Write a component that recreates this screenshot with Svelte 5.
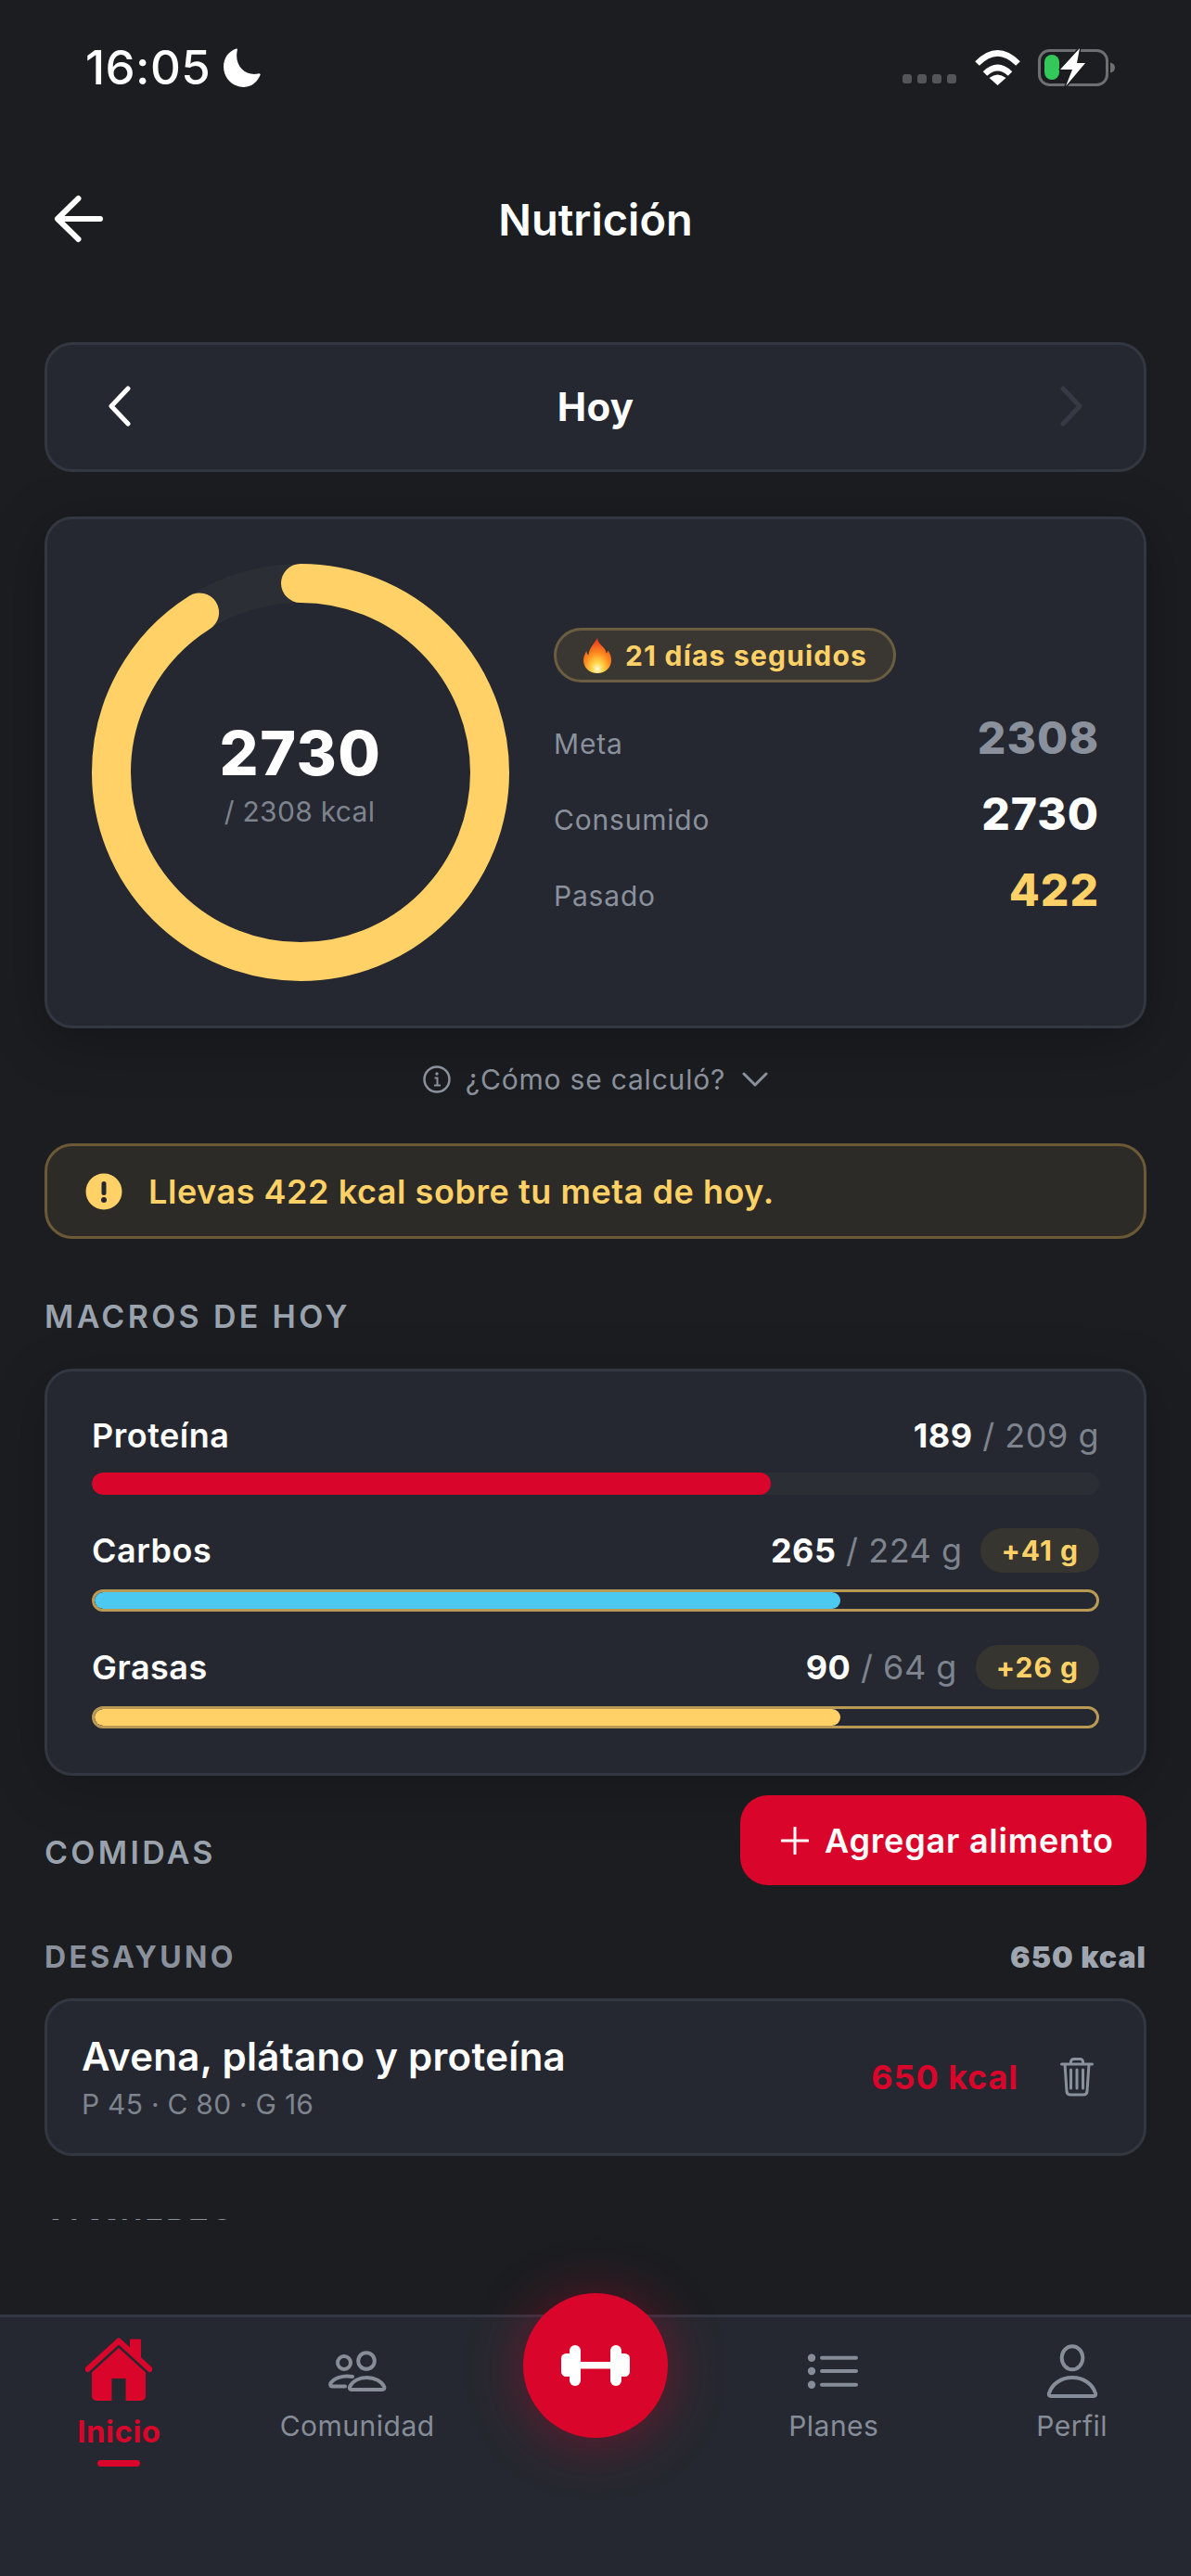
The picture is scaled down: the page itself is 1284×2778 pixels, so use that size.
<script>
  const stats = [
    { label: "Meta", value: "2308", tone: "muted" },
    { label: "Consumido", value: "2730", tone: "white" },
    { label: "Pasado", value: "422", tone: "gold" }
  ];

  const macros = [
    { name: "Proteína", eaten: 189, goal: 209, pct: 67.4, color: "#d9052b", extra: "" },
    { name: "Carbos", eaten: 265, goal: 224, pct: 74.4, color: "#4cc9f0", extra: "+41 g" },
    { name: "Grasas", eaten: 90, goal: 64, pct: 74.4, color: "#ffd166", extra: "+26 g" }
  ];

  const ringSize = 450;
  const ringStroke = 42;
  const ringRadius = (ringSize - ringStroke) / 2;
  const ringLength = 2 * Math.PI * ringRadius;
  const ringFill = 0.91;
</script>

<div class="app">
  <div class="status">
    <div class="status-left">
      <span class="time">16:05</span>
      <svg width="44" height="44" viewBox="0 0 42 42"><path fill="#fff" d="M14 1.500C6 4 1 11.500 1 20c0 11.500 9 21 21 21 8 0 14-5.500 17-13-1-1.500-2-1-4-.5C22 29 12 18 15 3.500c.5-2 0-2.500-1-2z"/></svg>
    </div>
    <div class="status-right">
      <div class="dots"><i></i><i></i><i></i><i></i></div>
      <svg class="wifi" width="51" height="38" viewBox="0 0 51 38">
        <path d="M3.500 14.500Q25.500-7.500 47.500 14.500" fill="none" stroke="#fff" stroke-width="6.500"/>
        <path d="M12 25.500Q25.500 12.500 39 25.500" fill="none" stroke="#fff" stroke-width="6.500"/>
        <path d="M25.500 38L16.500 30Q25.500 23 34.500 30z" fill="#fff"/>
      </svg>
      <svg width="88" height="44" viewBox="0 0 88 44">
        <rect x="3.500" y="3.500" width="73" height="37" rx="11" fill="none" stroke="#6e6f71" stroke-width="3"/>
        <path d="M80 16.500c3 .5 5 2.500 5 5.500s-2 5-5 5.500z" fill="#6e6f71"/>
        <rect x="9" y="8" width="16" height="27" rx="8" fill="#34c759"/>
        <path d="M47 1L26 24H39L32 42 53 17H44z" fill="#fff" stroke="#1b1d21" stroke-width="3" paint-order="stroke" stroke-linejoin="round"/>
      </svg>
    </div>
  </div>

  <header class="header">
    <svg width="60" height="60" viewBox="0 0 60 60"><path d="M53 30H9M29.500 8L7 30l22.500 22" fill="none" stroke="#fff" stroke-width="6" stroke-linecap="round" stroke-linejoin="round"/></svg>
    <h1>Nutrición</h1>
  </header>

  <main class="scroll">
    <div class="card day-nav">
      <svg width="30" height="44" viewBox="0 0 30 44"><path d="M23 3L5 22l18 19" fill="none" stroke="#fff" stroke-width="5" stroke-linecap="round" stroke-linejoin="round"/></svg>
      <span>Hoy</span>
      <svg width="30" height="44" viewBox="0 0 30 44"><path d="M7 3l18 19L7 41" fill="none" stroke="#353a45" stroke-width="5" stroke-linecap="round" stroke-linejoin="round"/></svg>
    </div>

    <section class="card ring-card">
      <div class="ring">
        <svg width={ringSize} height={ringSize} viewBox="0 0 {ringSize} {ringSize}">
          <circle cx="225" cy="225" r={ringRadius} fill="none" stroke="#2b2e35" stroke-width={ringStroke}/>
          <circle
            cx="225"
            cy="225"
            r={ringRadius}
            fill="none"
            stroke="#ffd166"
            stroke-width={ringStroke}
            stroke-linecap="round"
            stroke-dasharray="{ringLength * ringFill} {ringLength}"
            transform="rotate(-90 225 225)"
          />
        </svg>
        <div class="ring-text">
          <strong>2730</strong>
          <span>/ 2308 kcal</span>
        </div>
      </div>
      <div class="summary">
        <div class="streak">
          <svg width="30" height="38" viewBox="0 0 30 38">
            <defs>
              <radialGradient id="flame" cx="50%" cy="88%" r="85%">
                <stop offset="0" stop-color="#fffbe0"/>
                <stop offset="0.22" stop-color="#ffd84a"/>
                <stop offset="0.55" stop-color="#ff8a1f"/>
                <stop offset="1" stop-color="#e5341c"/>
              </radialGradient>
            </defs>
            <path fill="url(#flame)" d="M15 0c1 6 5 8 8 12 1 1.500 1.500 3 1.500 4.500 1-.5 1.500-1.500 1.800-3C29 17 30 20 30 24c0 8-6.500 14-15 14S0 32 0 24c0-4 1.500-7 3.500-10 0 2 .5 3.500 2 4.500C6 11 11 7 15 0z"/>
          </svg>
          <span>21 días seguidos</span>
        </div>
        <div class="stats">
          {#each stats as stat}
            <div class="stat">
              <span class="stat-label">{stat.label}</span>
              <span class="stat-value {stat.tone}">{stat.value}</span>
            </div>
          {/each}
        </div>
      </div>
    </section>

    <div class="how">
      <svg width="30" height="30" viewBox="0 0 30 30"><circle cx="15" cy="15" r="13.500" fill="none" stroke="#8a919c" stroke-width="2.500"/><path d="M12.500 13.500H15.500V21M12 21.500h7" fill="none" stroke="#8a919c" stroke-width="2"/><circle cx="15" cy="9" r="1.700" fill="#8a919c"/></svg>
      <span>¿Cómo se calculó?</span>
      <svg class="how-chevron" width="28" height="16" viewBox="0 0 28 16"><path d="M2 2l12 12L26 2" fill="none" stroke="#8a919c" stroke-width="3" stroke-linecap="round" stroke-linejoin="round"/></svg>
    </div>

    <div class="alert">
      <svg width="40" height="40" viewBox="0 0 40 40"><circle cx="20" cy="20" r="19.500" fill="#ffd166"/><rect x="17.500" y="9" width="5" height="15" rx="2.500" fill="#252830"/><circle cx="20" cy="29" r="3" fill="#252830"/></svg>
      <span>Llevas 422 kcal sobre tu meta de hoy.</span>
    </div>

    <h2 class="section-title macros-title">MACROS DE HOY</h2>

    <section class="card macros">
      {#each macros as macro}
        <div class="macro">
          <div class="macro-head">
            <span class="macro-name">{macro.name}</span>
            <span class="macro-values">
              <span><b>{macro.eaten}</b> / {macro.goal} g</span>
              {#if macro.extra}<em>{macro.extra}</em>{/if}
            </span>
          </div>
          <div class="bar" class:over={macro.extra}>
            <div class="bar-fill" style="width: {macro.pct}%; background: {macro.color};"></div>
          </div>
        </div>
      {/each}
    </section>

    <div class="meals-head">
      <h2 class="section-title">COMIDAS</h2>
      <button class="add">
        <svg width="30" height="30" viewBox="0 0 30 30"><path d="M15 1v28M1 15h28" stroke="#fff" stroke-width="3" stroke-linecap="round"/></svg>
        Agregar alimento
      </button>
    </div>

    <div class="meal-head">
      <span>DESAYUNO</span>
      <b>650 kcal</b>
    </div>
    <div class="card food">
      <div class="food-text">
        <div class="food-name">Avena, plátano y proteína</div>
        <div class="food-macros">P 45 · C 80 · G 16</div>
      </div>
      <span class="food-kcal">650 kcal</span>
      <svg width="36" height="42" viewBox="0 0 36 42">
        <path d="M1.500 7h33M11.500 6V4.500a3 3 0 0 1 3-3h7a3 3 0 0 1 3 3V6M5 7l2 29.500a4 4 0 0 0 4 3.500h14a4 4 0 0 0 4-3.500L31 7M11.500 13v20M18 13v20M24.500 13v20" fill="none" stroke="#8a919c" stroke-width="3" stroke-linecap="round" stroke-linejoin="round"/>
      </svg>
    </div>

    <div class="meal-head next">
      <span>ALMUERZO</span>
      <b>350 kcal</b>
    </div>
  </main>

  <nav class="tabs">
    <div class="tab active">
      <svg width="72" height="72" viewBox="0 0 72 72">
        <path d="M2.500 34L36 3.500 69.500 34" fill="none" stroke="#d9052b" stroke-width="6" stroke-linecap="round" stroke-linejoin="round"/>
        <path fill="#d9052b" d="M48 2.500a1 1 0 0 1 1-1h10a1 1 0 0 1 1 1V24L48 13zM36 11l29 26.500V63a5 5 0 0 1-5 5H43.500V44h-15v24H12a5 5 0 0 1-5-5V37.500z"/>
      </svg>
      <span>Inicio</span>
      <i></i>
    </div>
    <div class="tab">
      <svg width="72" height="72" viewBox="0 0 72 72" fill="none" stroke="#868d98" stroke-width="4" stroke-linecap="round" stroke-linejoin="round">
        <circle cx="46" cy="25" r="8.800"/>
        <circle cx="22" cy="27" r="7"/>
        <path d="M30 56h33c2 0 3-1.500 2.300-3-2.800-6-10.300-10-18.800-10S31 47 28 53c-.7 1.500 0 3 2 3z"/>
        <path d="M31 42c-11-2-20 2-23.500 7-1 2 0 3.500 1.500 3.500h14"/>
      </svg>
      <span>Comunidad</span>
    </div>
    <div class="tab-gap"></div>
    <div class="tab">
      <svg width="72" height="72" viewBox="0 0 72 72" fill="#868d98">
        <circle cx="12" cy="21.700" r="4.200"/>
        <circle cx="12" cy="36" r="4.200"/>
        <circle cx="12" cy="50.700" r="4.200"/>
        <path d="M23 21.700h37M23 36h37M23 50.700h37" stroke="#868d98" stroke-width="4" stroke-linecap="round"/>
      </svg>
      <span>Planes</span>
    </div>
    <div class="tab">
      <svg width="72" height="72" viewBox="0 0 72 72" fill="none" stroke="#868d98" stroke-width="4" stroke-linejoin="round">
        <ellipse cx="36" cy="21.700" rx="11.300" ry="12.500"/>
        <path d="M13 63h46c2 0 2.500-1.500 2-3-3-10-13-17-25-17S14 50 11 60c-.5 1.500 0 3 2 3z"/>
      </svg>
      <span>Perfil</span>
    </div>

    <div class="fab">
      <svg width="74" height="44" viewBox="0 0 74 44" fill="#fff">
        <rect x="0" y="9" width="14" height="25" rx="5.500"/>
        <rect x="9" y="0" width="12" height="44" rx="6"/>
        <rect x="20" y="18" width="34" height="7.500"/>
        <rect x="53" y="0" width="12" height="44" rx="6"/>
        <rect x="60" y="9" width="14" height="25" rx="5.500"/>
      </svg>
    </div>
  </nav>
</div>

<style>
  :global(body) {
    margin: 0;
    background: #1b1d21;
  }

  .app {
    position: relative;
    display: flex;
    flex-direction: column;
    width: 1284px;
    height: 2778px;
    overflow: hidden;
    background: #1b1d21;
    color: #fff;
    font-family: Inter, "Liberation Sans", sans-serif;
  }

  /* Status bar */
  .status {
    display: flex;
    justify-content: space-between;
    flex-shrink: 0;
    height: 152px;
    box-sizing: border-box;
    padding: 47px 79px 0 92px;
  }

  .status-left {
    display: flex;
    align-items: center;
    gap: 13px;
    height: 52px;
  }

  .time {
    font-size: 51px;
    font-weight: 500;
    line-height: 52px;
    letter-spacing: 0.4px;
  }

  .status-right {
    display: flex;
    align-items: flex-end;
    gap: 16px;
    height: 44px;
    margin-top: 4px;
  }

  .dots {
    display: flex;
    gap: 6px;
    margin-bottom: 5px;
    margin-right: 3px;
  }

  .dots i {
    width: 10px;
    height: 10px;
    border-radius: 3px;
    background: #545559;
  }

  .wifi {
    margin-bottom: 3px;
  }

  /* Header */
  .header {
    position: relative;
    display: flex;
    align-items: center;
    justify-content: center;
    flex-shrink: 0;
    height: 168px;
  }

  .header svg {
    position: absolute;
    left: 55px;
    top: 54px;
  }

  h1 {
    margin: 0;
    font-size: 47px;
    font-weight: 600;
  }

  /* Scroll area */
  .scroll {
    flex-shrink: 0;
    height: 2074px;
    box-sizing: border-box;
    padding: 49px 48px 0;
    overflow: hidden;
  }

  .card {
    box-sizing: border-box;
    background: #252830;
    border: 3px solid #323742;
    border-radius: 30px;
  }

  .day-nav {
    display: flex;
    align-items: center;
    justify-content: space-between;
    height: 140px;
    padding: 0 64px 2px;
    font-size: 42px;
    font-weight: 700;
    letter-spacing: 0.3px;
  }

  .ring-card {
    display: flex;
    gap: 48px;
    margin-top: 48px;
    padding: 48px;
    box-shadow: 0 12px 60px rgba(0, 0, 0, 0.28);
  }

  .ring {
    position: relative;
    flex-shrink: 0;
    width: 450px;
    height: 450px;
  }

  .ring svg {
    display: block;
  }

  .ring-text {
    position: absolute;
    inset: 0;
    display: flex;
    flex-direction: column;
    align-items: center;
    justify-content: center;
  }

  .ring-text strong {
    font-size: 66px;
    font-weight: 800;
    line-height: 78px;
    letter-spacing: 1.5px;
  }

  .ring-text span {
    margin-top: 6px;
    padding-right: 2px;
    font-size: 30px;
    line-height: 36px;
    letter-spacing: 0.3px;
    color: #7e848e;
  }

  .summary {
    display: flex;
    flex: 1;
    flex-direction: column;
    justify-content: center;
    min-width: 0;
  }

  .streak {
    display: flex;
    align-items: center;
    gap: 15px;
    align-self: flex-start;
    box-sizing: border-box;
    height: 59px;
    padding: 0 28px 0 29px;
    margin-bottom: 31px;
    background: #3a3733;
    border: 3px solid #6b5d40;
    border-radius: 30px;
    font-size: 30px;
    font-weight: 700;
    letter-spacing: 1.2px;
    color: #ffd166;
  }

  .stats {
    display: flex;
    flex-direction: column;
    gap: 24px;
  }

  .stat {
    display: flex;
    align-items: baseline;
    justify-content: space-between;
  }

  .stat-label {
    font-size: 30px;
    letter-spacing: 0.8px;
    color: #8a919c;
  }

  .stat-value {
    font-size: 48px;
    font-weight: 800;
    line-height: 58px;
    letter-spacing: 1px;
  }

  .muted { color: #8a919c; }
  .white { color: #fff; }
  .gold { color: #ffd166; }

  .how {
    display: flex;
    align-items: center;
    justify-content: center;
    gap: 16px;
    height: 38px;
    margin: 36px 0 50px;
    font-size: 30px;
    letter-spacing: 0.8px;
    color: #8a919c;
  }

  .how-chevron {
    margin-left: 2px;
  }

  .alert {
    display: flex;
    align-items: center;
    gap: 28px;
    box-sizing: border-box;
    height: 103px;
    padding: 0 41px;
    background: #2d2b27;
    border: 3px solid #6b5a35;
    border-radius: 30px;
    font-size: 36px;
    font-weight: 600;
    letter-spacing: 0.55px;
    color: #ffd166;
  }

  .section-title {
    margin: 0;
    font-size: 34px;
    font-weight: 600;
    line-height: 42px;
    letter-spacing: 3.3px;
    color: #9aa2ad;
  }

  .macros-title {
    margin: 63px 0 35px;
  }

  .macros {
    display: flex;
    flex-direction: column;
    gap: 36px;
    padding: 48px;
    box-shadow: 0 12px 60px rgba(0, 0, 0, 0.2);
  }

  .macro-head {
    display: flex;
    align-items: center;
    justify-content: space-between;
    min-height: 43px;
    margin-bottom: 18px;
    font-size: 36px;
    line-height: 43px;
    letter-spacing: 0.5px;
  }

  .macro-name {
    font-weight: 600;
  }

  .macro-values {
    display: flex;
    align-items: center;
    gap: 20px;
    color: #7e848e;
  }

  .macro-values b {
    font-weight: 700;
    color: #fff;
  }

  .macro-values em {
    display: flex;
    align-items: center;
    height: 48px;
    padding: 0 22px;
    border-radius: 24px;
    background: #37352f;
    font-size: 30px;
    font-style: normal;
    font-weight: 700;
    letter-spacing: 1px;
    color: #ffd166;
  }

  .bar {
    height: 24px;
    box-sizing: border-box;
    overflow: hidden;
    border-radius: 12px;
    background: #2b2e35;
  }

  .bar.over {
    border: 3px solid #b99a55;
    background: #252830;
  }

  .bar-fill {
    height: 100%;
    border-radius: 12px;
  }

  .meals-head {
    display: flex;
    align-items: flex-end;
    justify-content: space-between;
    margin-top: 21px;
  }

  .meals-head .section-title {
    margin-bottom: 14px;
  }

  .add {
    display: flex;
    align-items: center;
    gap: 17px;
    box-sizing: border-box;
    width: 438px;
    height: 97px;
    padding: 0 0 0 44px;
    border: 0;
    border-radius: 30px;
    background: #d9052b;
    color: #fff;
    font-family: inherit;
    font-size: 36px;
    font-weight: 600;
    letter-spacing: 0.8px;
    white-space: nowrap;
  }

  .meal-head {
    display: flex;
    align-items: center;
    justify-content: space-between;
    height: 40px;
    margin: 57px 0 25px;
    font-size: 32px;
    font-weight: 700;
    color: #8a919c;
  }

  .meal-head span {
    letter-spacing: 3.3px;
  }

  .meal-head b {
    letter-spacing: 1px;
    color: #a0a6b0;
  }

  .meal-head.next {
    margin-top: 60px;
  }

  .food {
    display: flex;
    align-items: center;
    height: 170px;
    padding: 0 54px 0 37px;
  }

  .food-text {
    flex: 1;
  }

  .food-name {
    font-size: 42px;
    font-weight: 600;
    line-height: 50px;
    letter-spacing: 0.3px;
  }

  .food-macros {
    margin-top: 8px;
    font-size: 30px;
    line-height: 36px;
    letter-spacing: 0.25px;
    color: #7e848e;
  }

  .food-kcal {
    margin-right: 45px;
    font-size: 36px;
    font-weight: 700;
    letter-spacing: 0.9px;
    color: #d9052b;
  }

  /* Bottom nav */
  .tabs {
    position: relative;
    display: grid;
    grid-template-columns: repeat(5, 1fr);
    box-sizing: border-box;
    height: 282px;
    margin-top: auto;
    padding-top: 22px;
    background: #252830;
    border-top: 3px solid #323742;
  }

  .tab {
    display: flex;
    flex-direction: column;
    align-items: center;
    font-size: 30px;
    line-height: 36px;
    letter-spacing: 0.5px;
    color: #868d98;
  }

  .tab span {
    margin-top: 5px;
  }

  .tab.active span {
    margin-top: 11px;
    font-size: 33px;
    font-weight: 700;
    color: #d9052b;
  }

  .tab i {
    width: 46px;
    height: 7px;
    margin-top: 13px;
    border-radius: 4px;
    background: #d9052b;
  }

  .fab {
    position: absolute;
    left: 564px;
    top: -26px;
    display: flex;
    align-items: center;
    justify-content: center;
    width: 156px;
    height: 156px;
    border-radius: 50%;
    background: #d9052b;
    box-shadow: 0 4px 60px rgba(217, 5, 43, 0.4);
  }
</style>
